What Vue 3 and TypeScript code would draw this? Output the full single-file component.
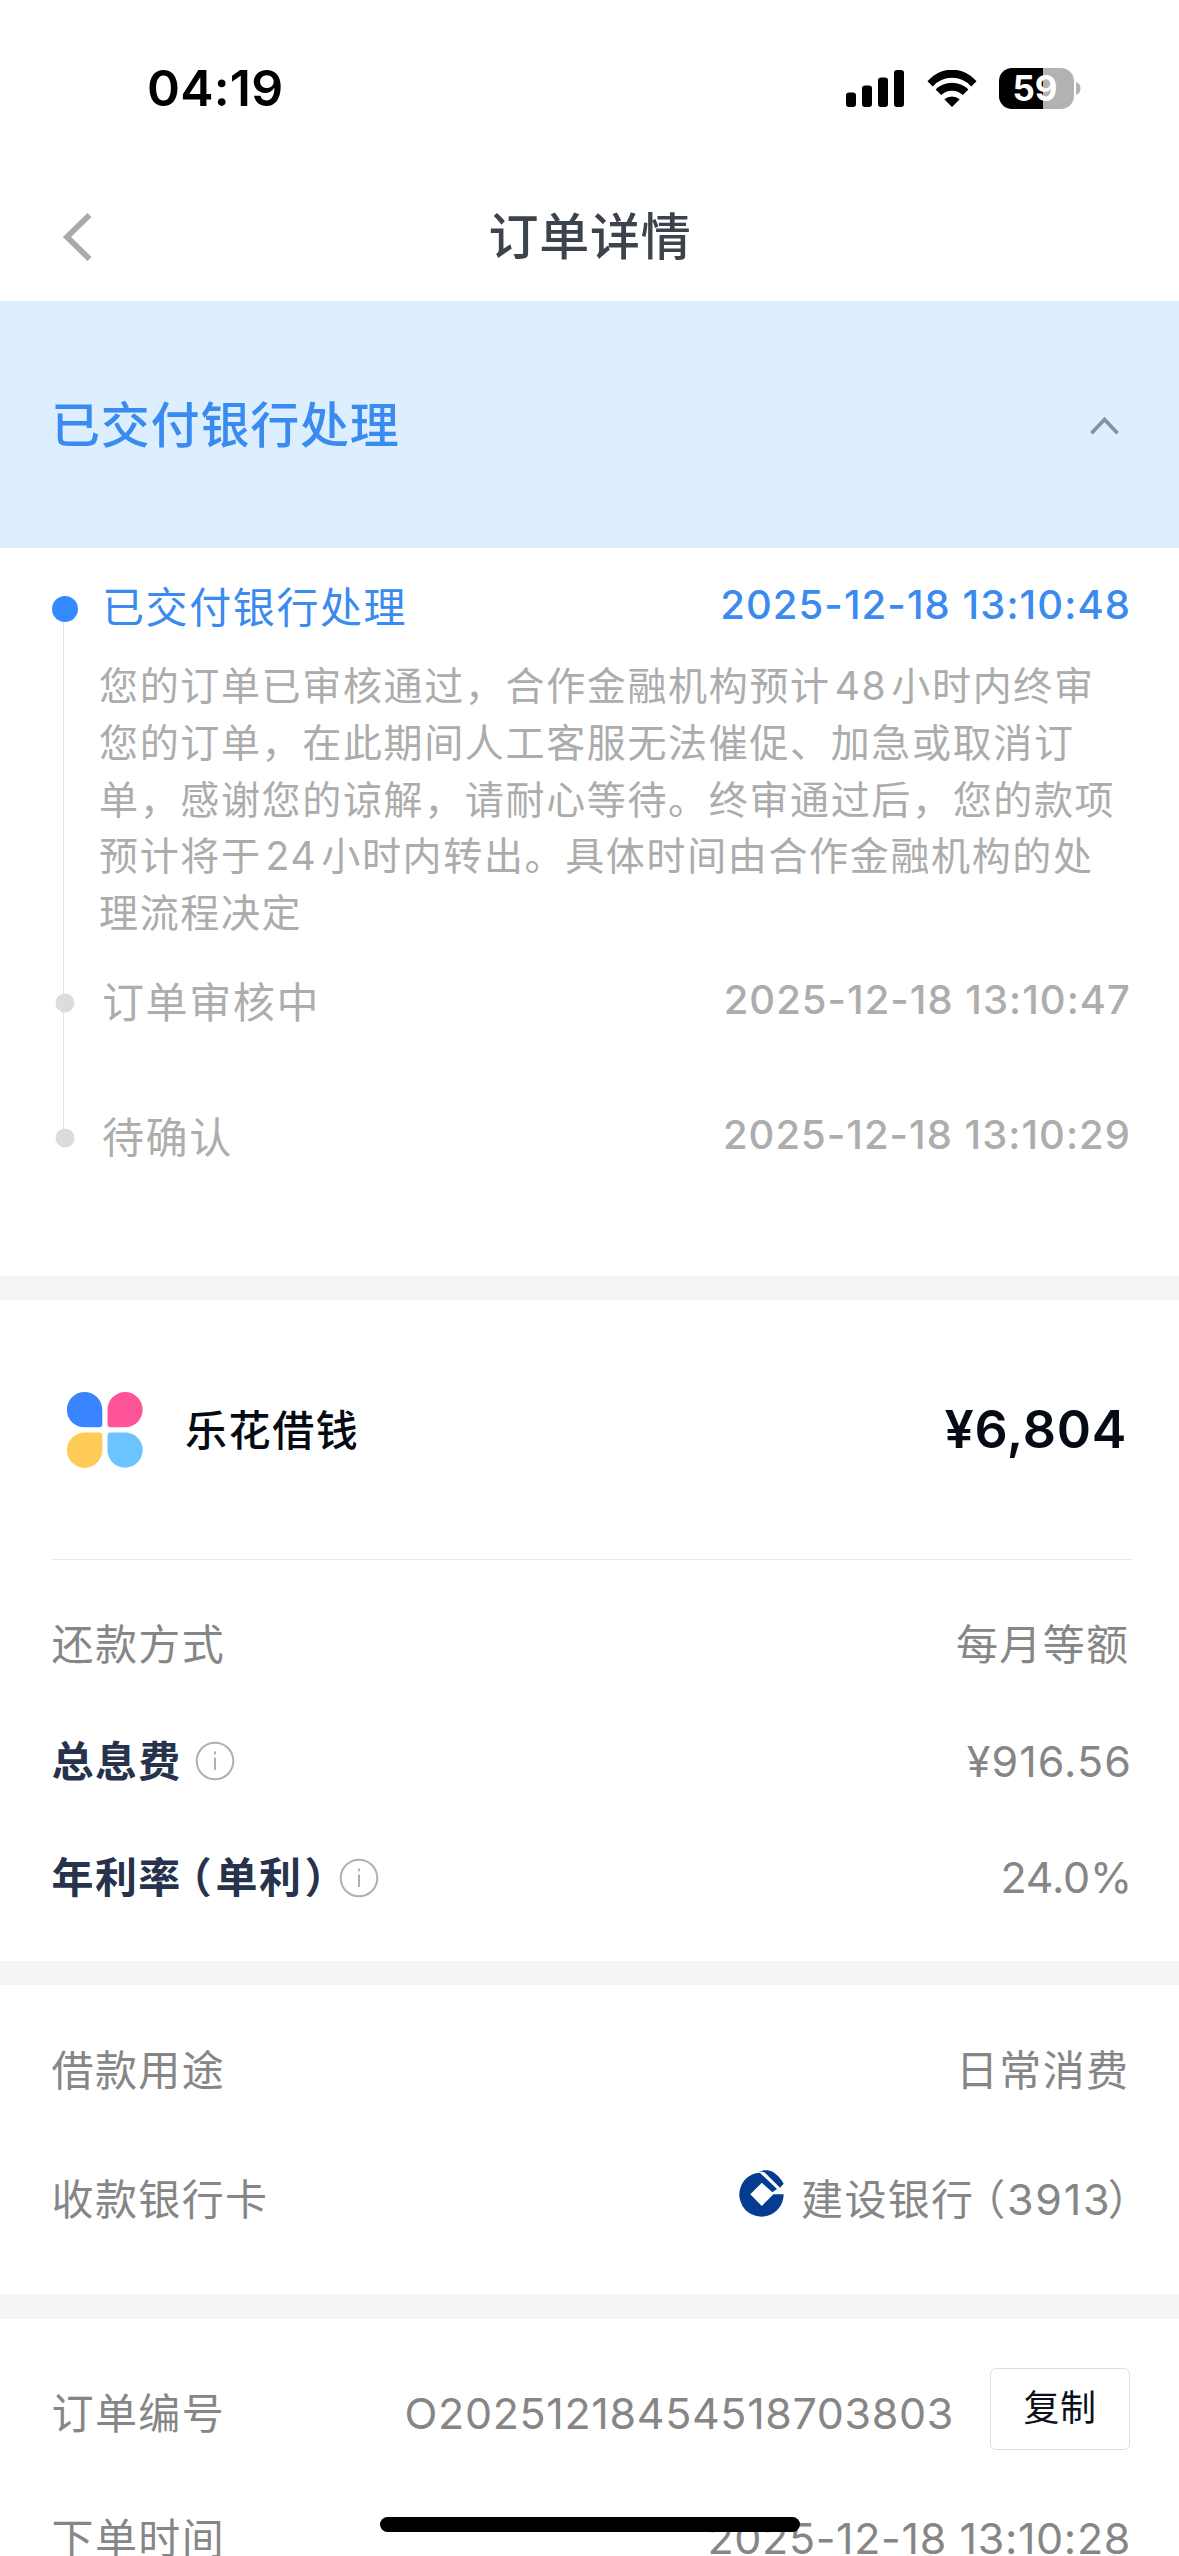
<script setup lang="ts">
interface Step {
  title: string
  time: string
  active?: boolean
}

const steps: Step[] = [
  { title: '已交付银行处理', time: '2025-12-18 13:10:48', active: true },
  { title: '订单审核中', time: '2025-12-18 13:10:47' },
  { title: '待确认', time: '2025-12-18 13:10:29' },
]
</script>

<template>
  <div class="screen">
    <header class="status-bar">
      <span class="clock">04:19</span>
      <div class="indicators">
        <svg class="signal" width="58" height="37" viewBox="0 0 58 37">
          <rect x="0" y="22.5" width="10" height="14.5" rx="3" />
          <rect x="16" y="15.5" width="10" height="21.5" rx="3" />
          <rect x="32" y="7.5" width="10" height="29.5" rx="3" />
          <rect x="48" y="0" width="10" height="37" rx="3" />
        </svg>
        <svg class="wifi" width="50" height="37" viewBox="0 0 50 37">
          <path d="M.4 11.2A32 32 0 0 1 49.6 11.2L44.2 16.4A25.6 25.6 0 0 0 5.8 16.4Z" />
          <path d="M8.6 19.6A23 23 0 0 1 41.4 19.6L35.8 25A15.6 15.6 0 0 0 14.2 25Z" />
          <path d="M17.3 29.2A12 12 0 0 1 32.7 29.2L25 37Z" />
        </svg>
        <div class="battery">
          <div class="battery-body"><span>59</span></div>
          <svg width="5" height="13" viewBox="0 0 5 13"><path d="M0 0C6 2 6 11 0 13Z" fill="#b2b2b2" /></svg>
        </div>
      </div>
    </header>

    <nav class="nav">
      <svg class="back" width="30" height="48" viewBox="0 0 30 48">
        <path d="M27.5 2L5 24L27.5 46" fill="none" stroke="#a9a9ae" stroke-width="5.8" />
      </svg>
      <h1>订单详情</h1>
    </nav>

    <section class="banner">
      <span>已交付银行处理</span>
      <svg width="29" height="18" viewBox="0 0 29 18">
        <path d="M1.5 16.2L14.5 2.4L27.5 16.2" fill="none" stroke="#84919e" stroke-width="3.6" />
      </svg>
    </section>

    <section class="timeline">
      <div class="rail"></div>
      <template v-for="(step, i) in steps" :key="step.time">
        <div class="step" :class="['step-' + (i + 1), { active: step.active }]">
          <i class="dot"></i>
          <span class="step-title">{{ step.title }}</span>
          <time>{{ step.time }}</time>
        </div>
        <p v-if="step.active" class="desc">
          您的订单已审核通过，合作金融机构预计<span class="num">48</span>小时内终审<br />您的订单，在此期间人工客服无法催促、加急或取消订<br />单，感谢您的谅解，请耐心等待。终审通过后，您的款项<br />预计将于<span class="num">24</span>小时内转出。具体时间由合作金融机构的处<br />理流程决定
        </p>
      </template>
    </section>

    <div class="gap"></div>

    <section class="loan">
      <div class="product">
        <svg class="logo" width="76" height="76" viewBox="0 0 76 76">
          <path d="M17.5 0A17.8 17.8 0 0 1 35.3 17.8V32.3A3 3 0 0 1 32.3 35.3H17.5A17.5 17.5 0 0 1 17.5 0Z" fill="#3a84ff" />
          <path d="M58 0A17.6 17.6 0 0 1 58 35.3H43.5A3 3 0 0 1 40.5 32.3V17.8A17.6 17.6 0 0 1 58 0Z" fill="#ff5498" />
          <path d="M17.5 40.5H32.3A3 3 0 0 1 35.3 43.5V58A17.7 17.7 0 1 1 17.5 40.5Z" fill="#ffcb57" />
          <path d="M43.5 40.5H58A17.6 17.6 0 1 1 40.5 58V43.5A3 3 0 0 1 43.5 40.5Z" fill="#6bc3ff" />
        </svg>
        <span class="product-name">乐花借钱</span>
        <span class="amount">¥6,804</span>
      </div>
      <div class="row">
        <span class="label">还款方式</span>
        <span class="value cjk">每月等额</span>
      </div>
      <div class="row">
        <span class="label strong">总息费</span>
        <svg class="info" width="40" height="40" viewBox="0 0 40 40">
          <circle cx="20" cy="20" r="18.3" />
          <path d="M20 16.5V29M20 10.4V13.2" />
        </svg>
        <span class="value money">¥916.56</span>
      </div>
      <div class="row">
        <span class="label strong">年利率<span class="paren open">（</span>单利<span class="paren close">）</span></span>
        <svg class="info" width="40" height="40" viewBox="0 0 40 40">
          <circle cx="20" cy="20" r="18.3" />
          <path d="M20 16.5V29M20 10.4V13.2" />
        </svg>
        <span class="value rate">24.0%</span>
      </div>
    </section>

    <div class="gap"></div>

    <section class="usage">
      <div class="row">
        <span class="label">借款用途</span>
        <span class="value cjk">日常消费</span>
      </div>
      <div class="row">
        <span class="label">收款银行卡</span>
        <div class="value card">
          <svg class="bank" width="45" height="47" viewBox="0 0 136 141">
            <path d="M135 73A67 67 0 1 1 50 9L63 8L115 57L101 67L69 38L34 73L69 108L104 73Z" />
            <path d="M60 4C72 -1 92 -1 104 6C118 15 128 27 135 41L124 53L80 9C74 4 66 3 60 4Z" />
          </svg>
          <span>建设银行<span class="paren card-open">（</span><span class="card-no">3913</span><span class="paren card-close">）</span></span>
        </div>
      </div>
    </section>

    <div class="gap last"></div>

    <section class="order">
      <div class="row">
        <span class="label">订单编号</span>
        <span class="value number">O20251218454518703803</span>
        <button class="copy">复制</button>
      </div>
      <div class="row">
        <span class="label">下单时间</span>
        <span class="value number">2025-12-18 13:10:28</span>
      </div>
    </section>

    <div class="home-indicator"></div>
  </div>
</template>

<style>
html,
body {
  margin: 0;
  overflow: hidden;
  background: #fff;
}
</style>

<style scoped>
.screen {
  position: relative;
  display: flex;
  flex-direction: column;
  width: 1179px;
  height: 2556px;
  overflow: hidden;
  background: #fff;
  font-family: Inter, 'Noto Sans CJK SC', sans-serif;
  white-space: nowrap;
}
.screen > * {
  box-sizing: border-box;
  flex-shrink: 0;
}

.status-bar {
  display: flex;
  align-items: center;
  justify-content: space-between;
  height: 176px;
  padding: 0 98px 0 147px;
}
.clock {
  font-size: 50px;
  font-weight: 600;
  line-height: 60px;
  letter-spacing: 0.2px;
}
.indicators {
  display: flex;
  align-items: center;
}
.wifi {
  margin: 0 22.5px;
}
.battery {
  display: flex;
  align-items: center;
  gap: 2px;
}
.battery-body {
  display: flex;
  align-items: center;
  justify-content: center;
  box-sizing: border-box;
  width: 75px;
  height: 41px;
  padding-right: 3px;
  border-radius: 13px;
  background: linear-gradient(90deg, #000 59%, #b2b2b2 59%);
  color: #fff;
  font-size: 35px;
  font-weight: 700;
}

.nav {
  display: flex;
  align-items: center;
  height: 125px;
  padding: 0 62px 4px;
}
.nav h1 {
  flex: 1;
  margin: 1px 29px 0 0;
  text-align: center;
  color: #3d434d;
  font-size: 50px;
  font-weight: 500;
  line-height: 60px;
  letter-spacing: 0.8px;
}

.banner {
  display: flex;
  align-items: center;
  justify-content: space-between;
  height: 247px;
  padding: 2px 60px 0 51px;
  background: #ddeefe;
  color: #398bf0;
  font-size: 49px;
  font-weight: 500;
  line-height: 60px;
  letter-spacing: 0.8px;
}

.timeline {
  position: relative;
  height: 728px;
  padding: 0 48px 0 102px;
}
.rail {
  position: absolute;
  left: 63px;
  top: 61px;
  width: 1px;
  height: 529px;
  background: #e2e2e2;
}
.step {
  position: relative;
  display: flex;
  align-items: center;
  justify-content: space-between;
  color: #adadad;
  font-size: 42px;
  line-height: 60px;
  letter-spacing: 1.6px;
}
.step-1 {
  height: 101px;
  padding-top: 8px;
  --dot: 61px;
}
.step-2 {
  height: 123px;
  --dot: 62.5px;
}
.step-3 {
  height: 146px;
  --dot: 74.5px;
}
.step-title {
  padding-top: 2px;
}
.dot {
  position: absolute;
  left: -37.5px;
  top: var(--dot);
  width: 19px;
  height: 19px;
  border-radius: 50%;
  background: #dcdcdc;
  transform: translate(-50%, -50%);
}
.active .dot {
  width: 26px;
  height: 26px;
  background: #338cff;
}
.step time {
  margin-bottom: 4px;
  font-size: 40px;
  font-weight: 500;
  letter-spacing: 1.02px;
}
.step.active {
  color: #3a8af0;
}
.step.active time {
  letter-spacing: 1.08px;
}
.desc {
  margin: 1px 0 -1px -3px;
  color: #acacac;
  font-size: 39px;
  line-height: 56.8px;
  letter-spacing: 1.65px;
}
.num {
  margin: 0 4px 0 4px;
}

.gap {
  height: 24px;
  background: #f5f5f5;
}
.gap.last {
  height: 25px;
}

.loan {
  height: 661px;
  padding: 0 47px 0 51.5px;
}
.product {
  display: flex;
  align-items: center;
  box-sizing: border-box;
  height: 260px;
  margin: 0 0 26px -0.5px;
  border-bottom: 1px solid #e9e9e9;
  color: #050a14;
  line-height: 60px;
}
.logo {
  margin: 1px 42px 0 16px;
}
.product-name {
  padding-top: 3px;
  font-size: 42px;
  font-weight: 500;
  letter-spacing: 1.6px;
}
.amount {
  margin: 0 5px 0 auto;
  font-size: 52px;
  font-weight: 600;
  letter-spacing: 0.7px;
}

.row {
  display: flex;
  align-items: center;
  height: 116.5px;
  color: #868686;
  font-size: 42px;
  line-height: 60px;
}
.label {
  padding-top: 2px;
  letter-spacing: 1.4px;
}
.strong {
  color: #27324c;
  font-weight: 700;
}
.info {
  margin: 1px 0 0 13.5px;
  fill: none;
  stroke: #b0b0b0;
  stroke-width: 2;
}
.paren {
  font-feature-settings: 'halt';
}
.open {
  margin: 0 2.5px 0 9px;
}
.close {
  margin: 0 -1.5px 0 2px;
}
.value {
  margin-left: auto;
  font-size: 43px;
}
.cjk {
  padding-top: 2px;
  margin-right: 2.5px;
  font-size: 42px;
  letter-spacing: 1.4px;
}
.money {
  letter-spacing: 1.1px;
}
.rate {
  letter-spacing: -0.2px;
}

.usage {
  height: 309px;
  padding: 20px 47px 0 51.5px;
}
.usage .row {
  height: 129px;
}
.card {
  display: flex;
  align-items: center;
  padding-top: 2px;
  font-size: 42px;
  letter-spacing: 1.3px;
}
.bank {
  margin: 0 17px 12px 0;
  fill: #053c92;
}
.card-open {
  margin: 0 0.5px 0 10px;
}
.card-no {
  font-size: 43px;
  letter-spacing: 1.7px;
}
.card-close {
  margin: 0 2px 0 -3.5px;
}

.order {
  height: 237px;
  padding: 31px 48px 0 51.5px;
  overflow: hidden;
}
.order .row {
  height: 125.5px;
}
.number {
  letter-spacing: 0.64px;
}
.copy {
  box-sizing: border-box;
  width: 140px;
  height: 82px;
  margin: 0 1px 7px 36px;
  padding: 0 0 3px;
  border: 1px solid #dedede;
  border-radius: 6px;
  background: #fff;
  color: #0d101a;
  font: 400 36px/50px Inter, 'Noto Sans CJK SC', sans-serif;
  letter-spacing: 0.6px;
}

.home-indicator {
  position: absolute;
  left: 380px;
  top: 2517px;
  width: 420px;
  height: 15px;
  border-radius: 8px;
  background: #000;
}
</style>
